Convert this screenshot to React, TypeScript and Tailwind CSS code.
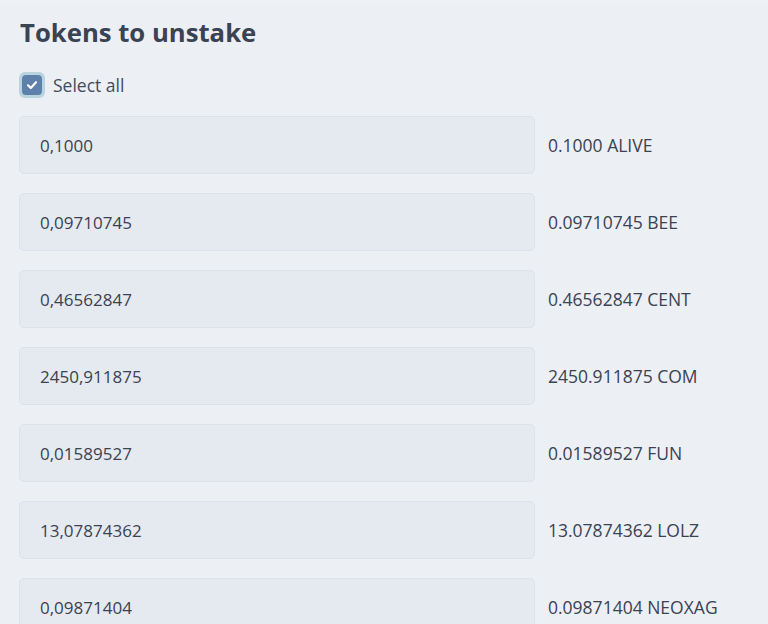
import React, { useState } from 'react';

const TOKENS = [
  { input: '0,1000', label: '0.1000 ALIVE' },
  { input: '0,09710745', label: '0.09710745 BEE' },
  { input: '0,46562847', label: '0.46562847 CENT' },
  { input: '2450,911875', label: '2450.911875 COM' },
  { input: '0,01589527', label: '0.01589527 FUN' },
  { input: '13,07874362', label: '13.07874362 LOLZ' },
  { input: '0,09871404', label: '0.09871404 NEOXAG' },
];

export default function App() {
  const [allChecked, setAllChecked] = useState(true);

  return (
    <div
      className="min-h-[624px] h-[624px] overflow-hidden bg-[#eceff4] text-[#3b4252]"
      style={{ fontFamily: '"Open Sans", "Noto Sans", sans-serif' }}
    >
      <div className="h-[14px] bg-gradient-to-b from-[#eff1f6] to-[#eceff4]" />
      <div className="px-[19px]">
        <h2 className="text-[25.7px] font-bold leading-[36px] pl-[1px] mt-[1px] text-[#3b4252]">Tokens to unstake</h2>

        {/* select all */}
        <label className="flex items-center gap-[8px] mt-[21px] h-[26px] cursor-pointer">
          <span className="w-[26px] h-[26px] rounded-[6px] bg-[#b9d3df] flex items-center justify-center">
            <span
              className="w-[20px] h-[20px] rounded-[4px] bg-[#5e81ac] flex items-center justify-center"
              onClick={() => setAllChecked(!allChecked)}
            >
              {allChecked && (
                <svg width="14" height="14" viewBox="0 0 14 14" fill="none">
                  <path d="M3 7.3L5.8 10L11 4.2" stroke="white" strokeWidth="2.2" strokeLinecap="round" strokeLinejoin="round" />
                </svg>
              )}
            </span>
          </span>
          <span className="text-[17.5px] text-[#434c5e]">Select all</span>
        </label>

        {/* token rows */}
        <div className="flex flex-col gap-[19px] mt-[18px]">
          {TOKENS.map((t) => (
            <div key={t.label} className="flex items-center gap-[13px]">
              <input
                type="text"
                defaultValue={t.input}
                className="w-[516px] h-[58px] shrink-0 rounded-[5px] border border-[#dde2ea] bg-[#e5e9f0] px-[20px] pt-[1px] text-[17px] text-[#3b4252] outline-none"
              />
              <span className="text-[17.5px] pt-[1px] text-[#3b4252] whitespace-nowrap">{t.label}</span>
            </div>
          ))}
        </div>
      </div>
    </div>
  );
}
